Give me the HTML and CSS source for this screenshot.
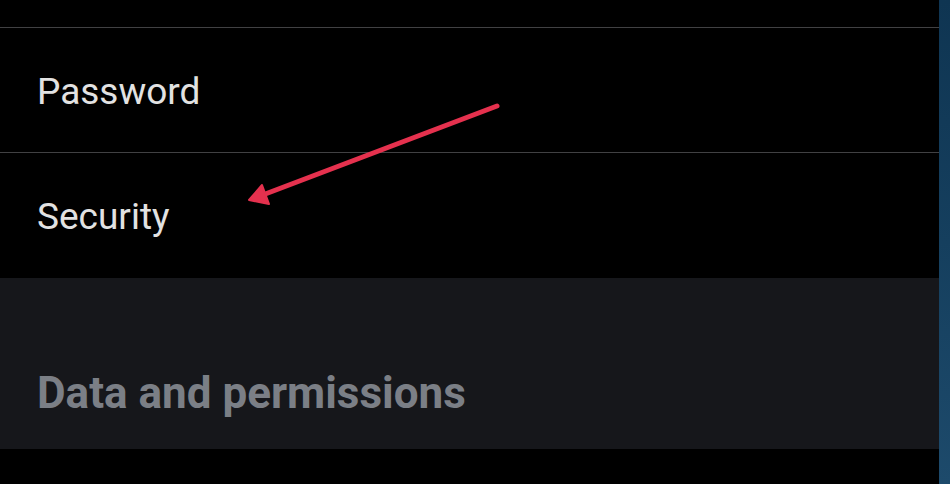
FILE: index.html
```html
<!DOCTYPE html>
<html>
<head>
<meta charset="utf-8">
<link rel="stylesheet" href="styles.css">
</head>
<body>
<div class="screen">
  <main class="settings">
    <div class="row row-top"></div>
    <div class="row"><span class="label">Password</span></div>
    <div class="row"><span class="label">Security</span></div>
    <section class="group">
      <h2 class="group-title">Data and permissions</h2>
    </section>
    <div class="bottom"></div>
  </main>
  <div class="edge"></div>
  <svg class="arrow" width="950" height="484" viewBox="0 0 950 484">
    <line x1="497" y1="106" x2="260" y2="196" stroke="#e5314e" stroke-width="5" stroke-linecap="round"/>
    <polygon points="249,200 262,185 269,204" fill="#e5314e" stroke="#e5314e" stroke-width="2" stroke-linejoin="round"/>
  </svg>
</div>
</body>
</html>
```
FILE: styles.css
```css
* { box-sizing: border-box; }
html, body { margin: 0; padding: 0; background: #000; }
body { font-family: Roboto, "Noto Sans", sans-serif; }
.screen {
  position: relative;
  width: 950px;
  height: 484px;
  display: flex;
  overflow: hidden;
}
.settings {
  flex: 1;
  display: flex;
  flex-direction: column;
  background: #000;
}
.row {
  height: 125px;
  display: flex;
  align-items: center;
  padding-left: 37px;
  border-bottom: 1px solid #414143;
}
.row-top { height: 28px; }
.row:nth-child(3) { border-bottom: none; height: 125px; }
.label {
  color: #e2e2e2;
  font-size: 37px;
  letter-spacing: 0;
  margin-top: 2px;
}
.group {
  height: 171px;
  background: #16171b;
  display: flex;
  align-items: flex-end;
  padding: 0 0 34px 37px;
}
.group-title {
  margin: 0;
  color: #7b7f86;
  font-size: 44px;
  font-weight: 700;
  letter-spacing: 0;
  line-height: 1;
}
.bottom { flex: 1; background: #000; }
.edge {
  width: 11px;
  background: linear-gradient(#0f3552, #153f5e 50%, #1d4a6b);
}
.arrow {
  position: absolute;
  left: 0;
  top: 0;
  pointer-events: none;
}
```
